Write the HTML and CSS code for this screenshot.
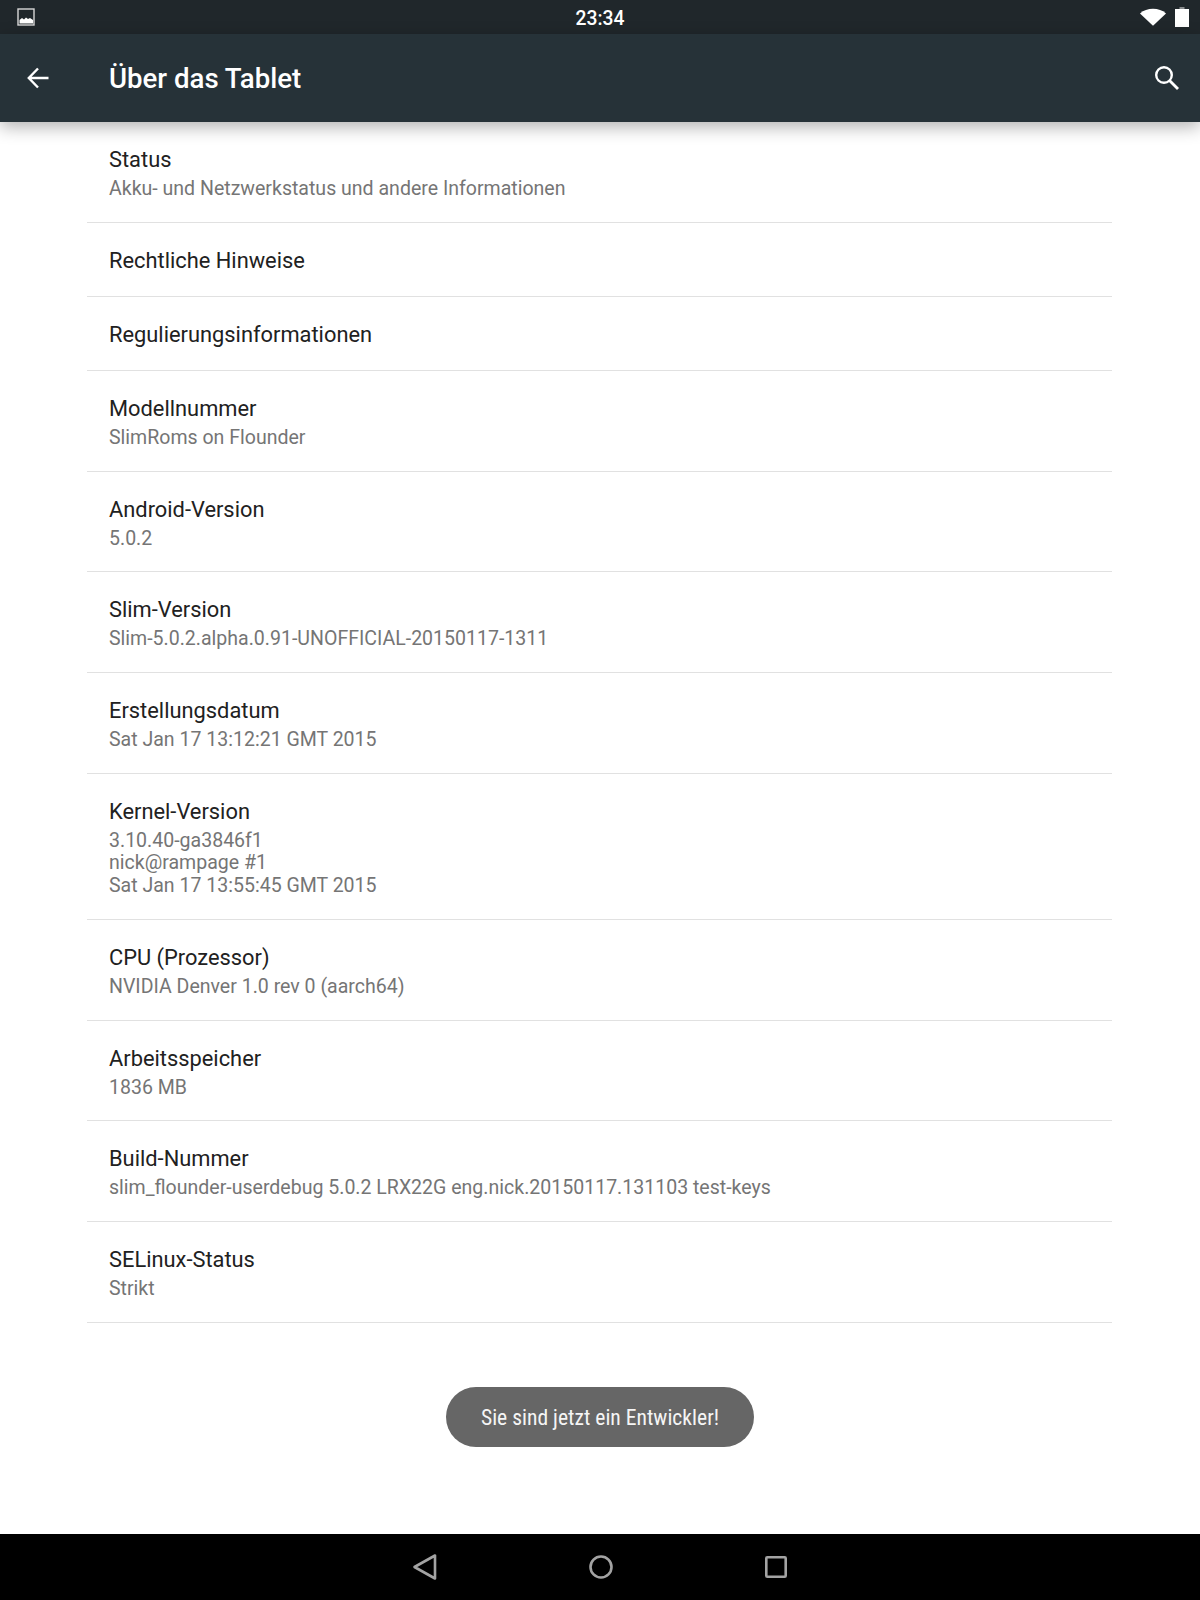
FILE: index.html
```html
<!DOCTYPE html>
<html lang="de">
<head>
    <meta charset="UTF-8">
    <title>Über das Tablet</title>
    <link rel="stylesheet" href="styles.css">
</head>
<body>
    <div class="screen">
        <div class="status-bar">
            <svg class="status-image" width="18" height="18" viewBox="0 0 18 18">
                <rect x="1" y="1" width="16" height="16" fill="none" stroke="#d8d8d8" stroke-width="1.4"/>
                <path d="M2.5 15.5V12l2.5-2 2 1.5 2-2 2 1.5 2-1 3 2v3.5z" fill="#fff"/>
            </svg>
            <span class="clock">23:34</span>
            <div class="status-icons">
                <svg width="26" height="18" viewBox="0 0 26 18"><path d="M0 5.5C3.500 2.300 8 .8 13 .8s9.500 1.500 13 4.700L13 17.800z" fill="#fff"/></svg>
                <svg width="14" height="20" viewBox="0 0 14 20"><path d="M4.500 0h5v2h-5z" fill="#8a8d8f"/><path d="M0 2h14v18H0z" fill="#fff"/></svg>
            </div>
        </div>

        <div class="action-bar">
            <svg class="back-icon" width="24" height="24" viewBox="0 0 24 24"><path d="M22.500 12H3M12 2.500 2.800 12l9.200 9.500" fill="none" stroke="#fff" stroke-width="2.400"/></svg>
            <h1>Über das Tablet</h1>
            <svg class="search-icon" width="26" height="26" viewBox="0 0 26 26"><circle cx="10" cy="10" r="7.800" fill="none" stroke="#fff" stroke-width="2.400"/><path d="M15.500 15.500 24 24" stroke="#fff" stroke-width="2.800"/></svg>
        </div>

        <ul class="list">
            <li class="row"><div class="title">Status</div><div class="summary">Akku- und Netzwerkstatus und andere Informationen</div></li>
            <li class="row single"><div class="title">Rechtliche Hinweise</div></li>
            <li class="row single"><div class="title">Regulierungsinformationen</div></li>
            <li class="row"><div class="title">Modellnummer</div><div class="summary">SlimRoms on Flounder</div></li>
            <li class="row"><div class="title">Android-Version</div><div class="summary">5.0.2</div></li>
            <li class="row"><div class="title">Slim-Version</div><div class="summary">Slim-5.0.2.alpha.0.91-UNOFFICIAL-20150117-1311</div></li>
            <li class="row"><div class="title">Erstellungsdatum</div><div class="summary">Sat Jan 17 13:12:21 GMT 2015</div></li>
            <li class="row"><div class="title">Kernel-Version</div><div class="summary">3.10.40-ga3846f1<br>nick@rampage #1<br>Sat Jan 17 13:55:45 GMT 2015</div></li>
            <li class="row"><div class="title">CPU (Prozessor)</div><div class="summary">NVIDIA Denver 1.0 rev 0 (aarch64)</div></li>
            <li class="row"><div class="title">Arbeitsspeicher</div><div class="summary">1836 MB</div></li>
            <li class="row"><div class="title">Build-Nummer</div><div class="summary">slim_flounder-userdebug 5.0.2 LRX22G eng.nick.20150117.131103 test-keys</div></li>
            <li class="row"><div class="title">SELinux-Status</div><div class="summary">Strikt</div></li>
        </ul>

        <div class="toast-area">
            <div class="toast">Sie sind jetzt ein Entwickler!</div>
        </div>

        <div class="nav-bar">
            <svg width="26" height="28" viewBox="0 0 26 28"><path d="M23 2.500V25.500L2.500 14z" fill="none" stroke="#a3a3a3" stroke-width="2.600" stroke-linejoin="round"/></svg>
            <svg width="26" height="26" viewBox="0 0 26 26"><circle cx="13" cy="13" r="10.500" fill="none" stroke="#a3a3a3" stroke-width="2.600"/></svg>
            <svg width="24" height="24" viewBox="0 0 24 24"><rect x="2.300" y="2.300" width="19.400" height="19.400" rx="1" fill="none" stroke="#a3a3a3" stroke-width="2.600"/></svg>
        </div>
    </div>
</body>
</html>
```

FILE: styles.css
```css
body {
    margin: 0;
    font-family: Roboto, "Liberation Sans", sans-serif;
    background: #fff;
}
.screen {
    width: 1200px;
    height: 1600px;
    display: flex;
    flex-direction: column;
    overflow: hidden;
}
.status-bar {
    height: 34px;
    background: #20272b;
    display: flex;
    align-items: center;
    position: relative;
    padding: 0 11px 0 17px;
    flex-shrink: 0;
}
.clock {
    position: absolute;
    left: 0;
    right: 0;
    top: 7px;
    text-align: center;
    color: #fff;
    font-size: 19.300px;
    line-height: 24px;
    font-weight: 500;
}
.status-icons {
    margin-left: auto;
    display: flex;
    align-items: center;
    gap: 9px;
}
.action-bar {
    height: 88px;
    background: #263238;
    display: flex;
    align-items: center;
    padding: 0 20px 0 26px;
    box-shadow: 0 5px 16px rgba(0, 0, 0, 0.3);
    position: relative;
    flex-shrink: 0;
}
.action-bar h1 {
    margin: 0 0 0 59px;
    color: #fff;
    font-size: 27.600px;
    font-weight: 500;
    flex: 1;
}
.list {
    list-style: none;
    margin: 0 88px 0 87px;
    padding: 0;
}
.row {
    border-bottom: 1px solid #e1e1e1;
    padding: 24px 22px 21.300px;
}
.row.single {
    padding: 24px 22px 22px;
}
.title {
    font-size: 21.850px;
    line-height: 27px;
    color: #212121;
}
.summary {
    font-size: 19.550px;
    line-height: 22.500px;
    color: #757575;
    margin-top: 5px;
}
.toast-area {
    flex: 1;
    display: flex;
    justify-content: center;
    align-items: flex-start;
    padding-top: 64px;
}
.toast {
    background: #666;
    color: #f5f5f5;
    width: 308px;
    height: 60px;
    border-radius: 30px;
    font-size: 21.600px;
    line-height: 62px;
    text-align: center;
    font-stretch: condensed;
}
.nav-bar {
    height: 66px;
    background: #000;
    display: flex;
    justify-content: center;
    align-items: center;
    gap: 150px;
    padding-right: 1px;
    flex-shrink: 0;
}
```
